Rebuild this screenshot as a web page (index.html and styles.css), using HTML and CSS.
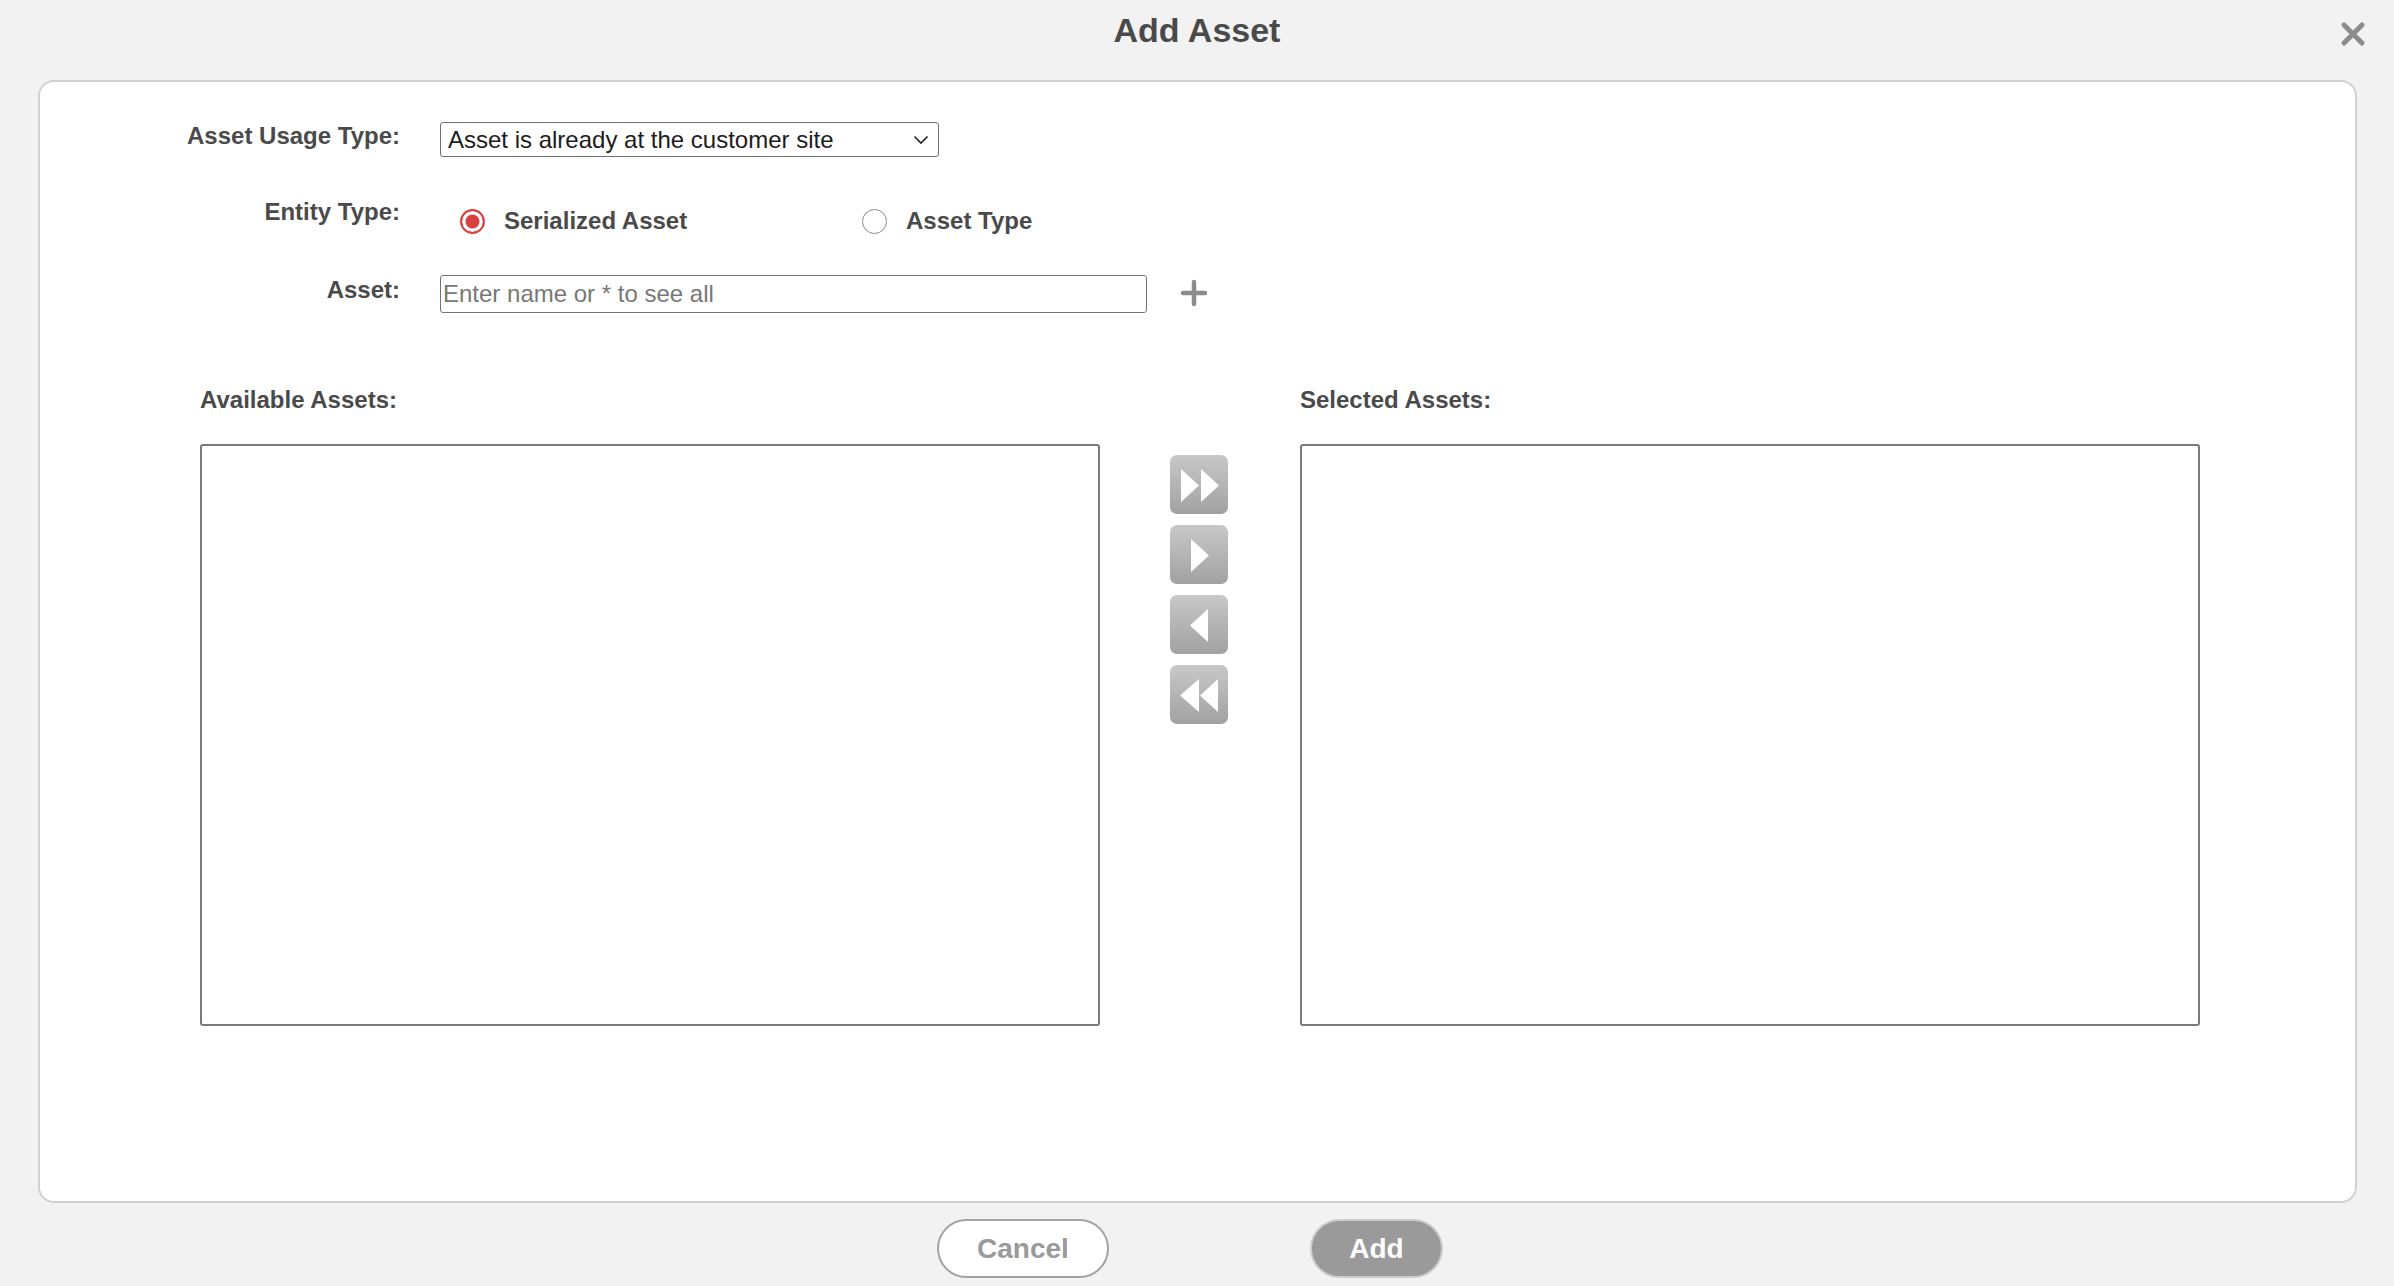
FILE: index.html
```html
<!DOCTYPE html>
<html lang="en">
<head>
    <meta charset="UTF-8">
    <meta name="viewport" content="width=device-width, initial-scale=1.0">
    <title>Add Asset</title>
    <link rel="stylesheet" href="styles.css">
</head>
<body>
    <div class="header">
        <h1 class="title">Add Asset</h1>
        <button class="close-btn" title="Close">
            <svg viewBox="0 0 28 28" width="28" height="28"><path d="M5 5 L23 23 M23 5 L5 23" stroke="#8c8c8c" stroke-width="5" stroke-linecap="round" fill="none"/></svg>
        </button>
    </div>

    <div class="panel">
        <div class="form-row row-usage">
            <label class="form-label" for="usageType">Asset Usage Type:</label>
            <div class="select-wrap">
                <select id="usageType" class="usage-select">
                    <option>Asset is already at the customer site</option>
                    <option>Asset will be shipped to the customer site</option>
                </select>
                <svg class="chevron" viewBox="0 0 16 10" width="16" height="10"><path d="M1.5 1.5 L8 8 L14.5 1.5" stroke="#222" stroke-width="1.6" fill="none"/></svg>
            </div>
        </div>

        <div class="form-row row-entity">
            <div class="form-label">Entity Type:</div>
            <div class="radio-group">
                <label class="radio-option"><input type="radio" name="entity" checked> Serialized Asset</label>
                <label class="radio-option"><input type="radio" name="entity"> Asset Type</label>
            </div>
        </div>

        <div class="form-row row-asset">
            <label class="form-label" for="assetName">Asset:</label>
            <input type="text" id="assetName" class="asset-input" placeholder="Enter name or * to see all">
            <button class="add-icon" title="New asset">
                <svg viewBox="0 0 28 28" width="28" height="28"><path d="M14 3 V25 M3 14 H25" stroke="#8c8c8c" stroke-width="4.5" stroke-linecap="round" fill="none"/></svg>
            </button>
        </div>

        <div class="dual-list">
            <div class="list-col">
                <div class="list-title">Available Assets:</div>
                <div class="list-box" id="availableAssets"></div>
            </div>
            <div class="move-buttons">
                <button class="move-btn" title="Add all">
                    <svg viewBox="0 0 58 58" width="58" height="58"><polygon points="11,13 29,29.5 11,46" fill="#fff"/><polygon points="31,13 49,29.5 31,46" fill="#fff"/></svg>
                </button>
                <button class="move-btn" title="Add">
                    <svg viewBox="0 0 58 58" width="58" height="58"><polygon points="21,13 39,29.5 21,46" fill="#fff"/></svg>
                </button>
                <button class="move-btn" title="Remove">
                    <svg viewBox="0 0 58 58" width="58" height="58"><polygon points="38,13 20,29.5 38,46" fill="#fff"/></svg>
                </button>
                <button class="move-btn" title="Remove all">
                    <svg viewBox="0 0 58 58" width="58" height="58"><polygon points="29,13 10,29.5 29,46" fill="#fff"/><polygon points="48,13 30,29.5 48,46" fill="#fff"/></svg>
                </button>
            </div>
            <div class="list-col">
                <div class="list-title">Selected Assets:</div>
                <div class="list-box" id="selectedAssets"></div>
            </div>
        </div>
    </div>

    <div class="footer">
        <button class="btn-cancel">Cancel</button>
        <button class="btn-add">Add</button>
    </div>
</body>
</html>
```

FILE: styles.css
```css
body { margin: 0; background: #f2f2f2; font-family: "Liberation Sans", Arial, Helvetica, sans-serif; color: #4a4a4a; }
button { font-family: inherit; cursor: pointer; }

.header { position: relative; height: 80px; text-align: center; }
.title { margin: 0; font-size: 34px; line-height: 60px; font-weight: bold; color: #4a4a4a; }
.close-btn { position: absolute; top: 20px; right: 27px; width: 28px; height: 28px; padding: 0; border: none; background: none; }
.close-btn svg { display: block; }

.panel { box-sizing: border-box; height: 1123px; margin: 0 37px 0 38px; padding-top: 40px; background: #fff; border: 2px solid #d0d0d0; border-radius: 16px; }

.form-row { display: flex; align-items: flex-start; }
.form-label { width: 360px; margin-right: 40px; text-align: right; font-size: 24px; line-height: 28px; font-weight: bold; color: #4a4a4a; }
.row-entity { margin-top: 41px; }
.row-asset { margin-top: 40px; }
.row-asset .form-label { margin-top: 1px; }

.select-wrap { position: relative; width: 499px; }
.usage-select { box-sizing: border-box; width: 100%; height: 35px; padding: 0 30px 0 7px; appearance: none; -webkit-appearance: none; background: #fff; border: 1.5px solid #6f6f6f; border-radius: 3px; font-family: inherit; font-size: 24px; color: #1c1c1c; }
.chevron { position: absolute; right: 10px; top: 13px; pointer-events: none; }

.radio-group { display: flex; padding-top: 9px; }
.radio-option { display: flex; align-items: center; width: 382px; margin-left: 20px; font-size: 24px; line-height: 28px; font-weight: bold; color: #4a4a4a; }
.radio-option input { appearance: none; -webkit-appearance: none; box-sizing: border-box; width: 25px; height: 25px; margin: 0 19px 0 0; border: 1.5px solid #8a8a8a; border-radius: 50%; background: #fff; }
.radio-option input:checked { border: 2px solid #d8413d; background: #d8413d; box-shadow: inset 0 0 0 3.5px #fff; }

.asset-input { box-sizing: border-box; width: 707px; height: 38px; padding: 0 2px; border: 1.5px solid #747474; border-radius: 3px; font-family: inherit; font-size: 24px; color: #1c1c1c; }
.asset-input::placeholder { color: #777; }
.add-icon { width: 28px; height: 28px; margin: 4px 0 0 33px; padding: 0; border: none; background: none; }
.add-icon svg { display: block; }

.dual-list { display: flex; margin-top: 73px; padding-left: 160px; }
.list-col { width: 900px; }
.list-title { font-size: 24px; line-height: 28px; font-weight: bold; color: #4a4a4a; }
.list-box { box-sizing: border-box; height: 582px; margin-top: 30px; background: #fff; border: 2px solid #7a7a7a; border-radius: 3px; }
.move-buttons { display: flex; flex-direction: column; gap: 11px; margin: 0 72px 0 70px; padding-top: 69px; }
.move-btn { width: 58px; height: 59px; padding: 0; border: none; border-radius: 7px; background: linear-gradient(#c8c8c8, #a1a1a1); }
.move-btn svg { display: block; }

.footer { display: flex; justify-content: center; gap: 201px; margin-top: 16px; padding-right: 14px; }
.btn-cancel, .btn-add { box-sizing: border-box; height: 59px; border-radius: 30px; font-size: 28px; font-weight: bold; }
.btn-cancel { width: 172px; background: #fff; border: 2px solid #a2a2a2; color: #9a9a9a; }
.btn-add { width: 133px; background: #9a9a9a; border: 2px solid #cdcdcd; color: #fff; }
```
